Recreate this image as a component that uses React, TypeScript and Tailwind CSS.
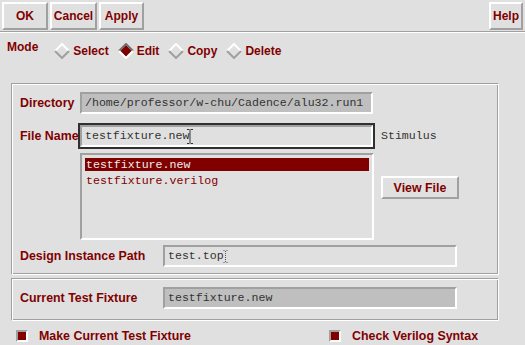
import type { ReactNode } from "react";

const MONO = "font-['Liberation_Mono','DejaVu_Sans_Mono',monospace] font-normal text-[11.6px] text-[#333]";

function Btn({ children, className }: { children: ReactNode; className: string }) {
  return (
    <div
      className={`flex items-center justify-center border-2 border-t-white border-l-white border-r-[#a0a0a0] border-b-[#a0a0a0] ${className}`}
    >
      {children}
    </div>
  );
}

function Diamond({ on }: { on?: boolean }) {
  const top = on ? "#6e6e6e" : "#ffffff";
  const bottom = on ? "#ffffff" : "#a0a0a0";
  return (
    <svg width="16" height="16" viewBox="0 0 16 16" className="shrink-0">
      {on && <polygon points="8,2 14,8 8,14 2,8" fill="#800000" />}
      <path d="M1 8 L8 1 L15 8" fill="none" stroke={top} strokeWidth="2" />
      <path d="M1 8 L8 15 L15 8" fill="none" stroke={bottom} strokeWidth="2" />
    </svg>
  );
}

function Radio({ label, on }: { label: string; on?: boolean }) {
  return (
    <div className="flex items-center gap-[3px]">
      <Diamond on={on} />
      <span>{label}</span>
    </div>
  );
}

function IBeam({ dotted }: { dotted?: boolean }) {
  if (dotted) {
    return (
      <svg width="5" height="13" viewBox="0 0 5 13" className="-ml-[1px] shrink-0">
        <path d="M0.5 0.5h1M3.5 0.5h1M2.5 1v11M0.5 12.5h1M3.5 12.5h1" stroke="#555" strokeWidth="1" strokeDasharray="1 1" fill="none" />
      </svg>
    );
  }
  return (
    <svg width="6" height="15" viewBox="0 0 6 15" className="-ml-[2px] shrink-0">
      <path d="M0 0.5H2.5M3.5 0.5H6M0 14.5H2.5M3.5 14.5H6M3 1V14" stroke="#333" strokeWidth="1" fill="none" />
    </svg>
  );
}

function Field({
  value,
  readOnly,
  cursor,
  className,
}: {
  value: string;
  readOnly?: boolean;
  cursor?: "beam" | "dotted";
  className: string;
}) {
  return (
    <div
      className={`flex items-center overflow-hidden border-2 border-t-[#a0a0a0] border-l-[#a0a0a0] border-b-white border-r-white pl-[3px] ${
        readOnly ? "bg-[#bfbfbf]" : "bg-[#e0e0e0]"
      } ${className}`}
    >
      <span className={`${MONO} whitespace-pre leading-[14px]`}>{value}</span>
      {cursor === "beam" && <IBeam />}
      {cursor === "dotted" && <IBeam dotted />}
    </div>
  );
}

function Check({ label }: { label: string }) {
  return (
    <div className="flex items-center">
      <div className="h-[12px] w-[12px] border-2 border-t-[#a0a0a0] border-l-[#a0a0a0] border-b-white border-r-white bg-[#800000]" />
      <span className="ml-[11px] whitespace-nowrap">{label}</span>
    </div>
  );
}

const ETCHED =
  "border border-t-[#a0a0a0] border-l-[#a0a0a0] border-b-white border-r-white shadow-[inset_1px_1px_0_#ffffff,inset_-1px_-1px_0_#a0a0a0]";

export default function App() {
  return (
    <div className="h-[345px] w-[525px] overflow-hidden bg-[#e0e0e0] font-['Liberation_Sans',Arial,sans-serif] text-[12.4px] font-bold leading-[14px] text-[#800000]">
      {/* action buttons */}
      <div className="flex h-[31px] items-start justify-between px-[2px] pt-[2px] text-[12px]">
        <div className="flex gap-[2px]">
          <Btn className="h-[28px] w-[46px]">OK</Btn>
          <Btn className="h-[28px] w-[47px]">Cancel</Btn>
          <Btn className="h-[28px] w-[45px]">Apply</Btn>
        </div>
        <Btn className="h-[28px] w-[34px]">Help</Btn>
      </div>
      <div className="h-[2px] border-t border-b border-t-[#a0a0a0] border-b-white" />

      {/* mode */}
      <div className="flex h-[50px] items-start pl-[7px] pt-[7px] text-[12px]">
        <span>Mode</span>
        <div className="ml-[16px] mt-[3px] flex h-[16px] items-center gap-[9px]">
          <Radio label="Select" />
          <Radio label="Edit" on />
          <Radio label="Copy" />
          <Radio label="Delete" />
        </div>
      </div>

      {/* main panel */}
      <div className={`ml-[11px] flex h-[192px] w-[488px] flex-col pl-[8px] pt-[6px] ${ETCHED}`}>
        <div className="flex h-[26px] items-center">
          <span className="w-[58px] whitespace-nowrap">Directory</span>
          <div className="h-[26px] w-[297px] p-[2px]">
            <Field value="/home/professor/w-chu/Cadence/alu32.run1" readOnly className="h-[22px] w-[293px]" />
          </div>
        </div>

        <div className="mt-[7px] flex h-[26px] items-center">
          <span className="w-[58px] whitespace-nowrap">File Name</span>
          <div className="h-[26px] w-[297px] border-2 border-[#303030]">
            <Field value="testfixture.new" cursor="beam" className="h-[22px] w-[293px]" />
          </div>
          <span className={`${MONO} ml-[6px]`}>Stimulus</span>
        </div>

        <div className="mt-[4px] flex">
          <div className="ml-[60px] h-[87px] w-[294px] border-2 border-t-[#a0a0a0] border-l-[#a0a0a0] border-b-white border-r-white px-[3px] pt-[3px]">
            <div className={`${MONO} h-[13px] bg-[#800000] pl-[1px] leading-[13px] text-[#ececec]`}>testfixture.new</div>
            <div className={`${MONO} mt-[3px] h-[13px] pl-[1px] leading-[13px] text-[#800000]`}>testfixture.verilog</div>
          </div>
          <Btn className="ml-[7px] mt-[23px] h-[23px] w-[78px]">View File</Btn>
        </div>

        <div className="mt-[5px] flex h-[22px] items-center">
          <span className="w-[143px] whitespace-nowrap">Design Instance Path</span>
          <Field value="test.top" cursor="dotted" className="h-[22px] w-[294px]" />
        </div>
      </div>

      {/* current fixture panel */}
      <div className={`ml-[11px] mt-[3px] h-[43px] w-[488px] pl-[8px] pt-[8px] ${ETCHED}`}>
        <div className="flex h-[22px] items-center">
          <span className="w-[143px] whitespace-nowrap">Current Test Fixture</span>
          <Field value="testfixture.new" readOnly className="h-[22px] w-[294px]" />
        </div>
      </div>

      {/* options */}
      <div className="mt-[9px] flex h-[12px] items-center pl-[16px]">
        <div className="w-[313px]">
          <Check label="Make Current Test Fixture" />
        </div>
        <Check label="Check Verilog Syntax" />
      </div>
    </div>
  );
}
